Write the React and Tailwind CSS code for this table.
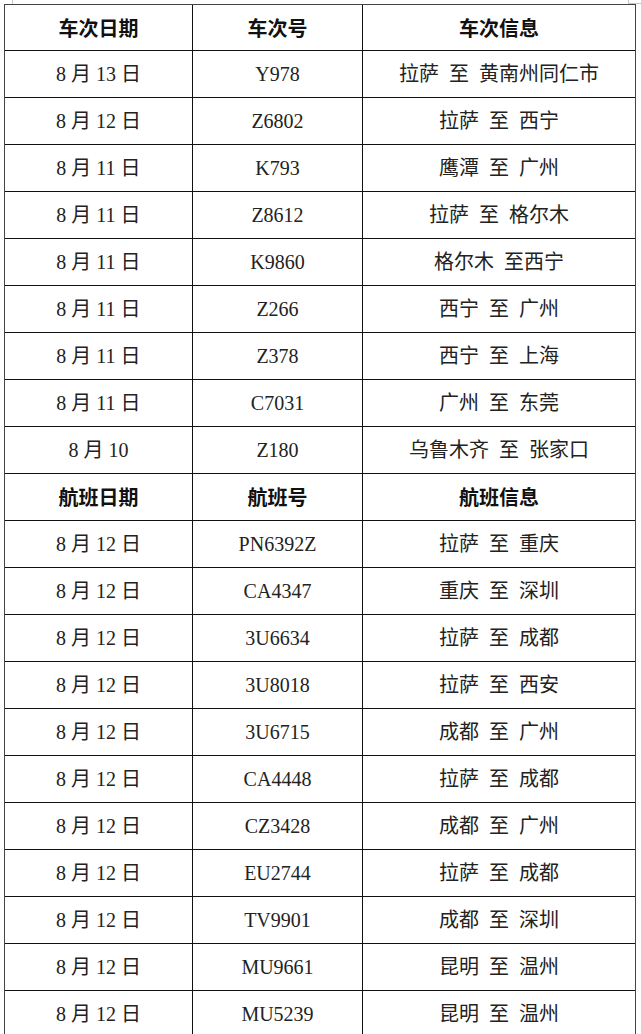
import React from 'react';

const trains = [
  ['8 月 13 日', 'Y978', '拉萨  至  黄南州同仁市'],
  ['8 月 12 日', 'Z6802', '拉萨  至  西宁'],
  ['8 月 11 日', 'K793', '鹰潭  至  广州'],
  ['8 月 11 日', 'Z8612', '拉萨  至  格尔木'],
  ['8 月 11 日', 'K9860', '格尔木  至西宁'],
  ['8 月 11 日', 'Z266', '西宁  至  广州'],
  ['8 月 11 日', 'Z378', '西宁  至  上海'],
  ['8 月 11 日', 'C7031', '广州  至  东莞'],
  ['8 月 10', 'Z180', '乌鲁木齐  至  张家口'],
];

const flights = [
  ['8 月 12 日', 'PN6392Z', '拉萨  至  重庆'],
  ['8 月 12 日', 'CA4347', '重庆  至  深圳'],
  ['8 月 12 日', '3U6634', '拉萨  至  成都'],
  ['8 月 12 日', '3U8018', '拉萨  至  西安'],
  ['8 月 12 日', '3U6715', '成都  至  广州'],
  ['8 月 12 日', 'CA4448', '拉萨  至  成都'],
  ['8 月 12 日', 'CZ3428', '成都  至  广州'],
  ['8 月 12 日', 'EU2744', '拉萨  至  成都'],
  ['8 月 12 日', 'TV9901', '成都  至  深圳'],
  ['8 月 12 日', 'MU9661', '昆明  至  温州'],
  ['8 月 12 日', 'MU5239', '昆明  至  温州'],
];

const Row = ({ cells, head, first }) => (
  <div
    className={`grid grid-cols-[188px_170px_272px] border-b border-[#111] ${first ? 'h-[46px]' : 'h-[47px]'}`}
  >
    {cells.map((c, i) => (
      <div
        key={i}
        className={`flex items-center justify-center whitespace-pre ${i < 2 ? 'border-r border-[#111]' : ''} ${
          head ? 'font-bold font-["Noto_Sans_CJK_SC",sans-serif]' : 'text-[#222]'
        }`}
      >
        {c}
      </div>
    ))}
  </div>
);

export default function App() {
  return (
    <div className="relative w-[641px] h-[1034px] overflow-hidden bg-white text-[20px] leading-none text-[#111] font-['Liberation_Serif','Noto_Sans_CJK_SC',serif]">
      {/* crop marks */}
      <div className="absolute left-[12px] top-0 w-px h-[4px] bg-[#c8c8c8]" />
      <div className="absolute left-[628px] top-0 w-px h-[4px] bg-[#c8c8c8]" />
      <div className="absolute left-[628px] top-[3px] w-[13px] h-px bg-[#c8c8c8]" />
      <div className="ml-[4px] mt-[4px] w-[632px] border-t border-l border-r border-[#444]">
        <Row cells={['车次日期', '车次号', '车次信息']} head first />
        {trains.map((r, i) => (
          <Row key={'t' + i} cells={r} />
        ))}
        <Row cells={['航班日期', '航班号', '航班信息']} head />
        {flights.map((r, i) => (
          <Row key={'f' + i} cells={r} />
        ))}
      </div>
    </div>
  );
}
